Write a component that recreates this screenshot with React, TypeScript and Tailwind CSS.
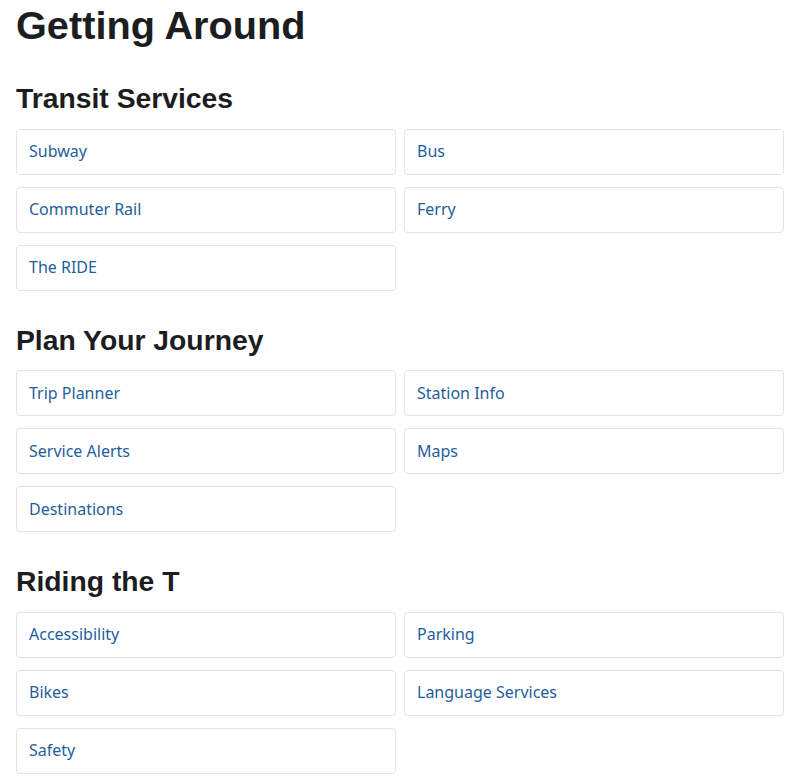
const sections: { title: string; links: string[] }[] = [
  {
    title: "Transit Services",
    links: ["Subway", "Bus", "Commuter Rail", "Ferry", "The RIDE"],
  },
  {
    title: "Plan Your Journey",
    links: ["Trip Planner", "Station Info", "Service Alerts", "Maps", "Destinations"],
  },
  {
    title: "Riding the T",
    links: ["Accessibility", "Parking", "Bikes", "Language Services", "Safety"],
  },
];

export default function App() {
  return (
    <div className="min-h-screen bg-white px-4 pb-4 font-['Liberation_Sans',Arial,sans-serif] text-[#1c1d21]">
      <h1 className="pt-[1.25px] text-[39.7px] font-bold leading-[48px]">Getting Around</h1>

      {sections.map((section) => (
        <section key={section.title} className="mt-8">
          <h2 className="mb-[13.5px] text-[28.3px] font-bold leading-[34px]">{section.title}</h2>
          <div className="grid grid-cols-2 gap-x-2 gap-y-3">
            {section.links.map((link) => (
              <a
                key={link}
                href="#"
                className="block rounded border border-[#e3e4e8] bg-white px-3 pt-[11.5px] pb-[12.5px] font-['Noto_Sans',sans-serif] text-base leading-5 text-[#1f5e9b]"
              >
                {link}
              </a>
            ))}
          </div>
        </section>
      ))}
    </div>
  );
}
